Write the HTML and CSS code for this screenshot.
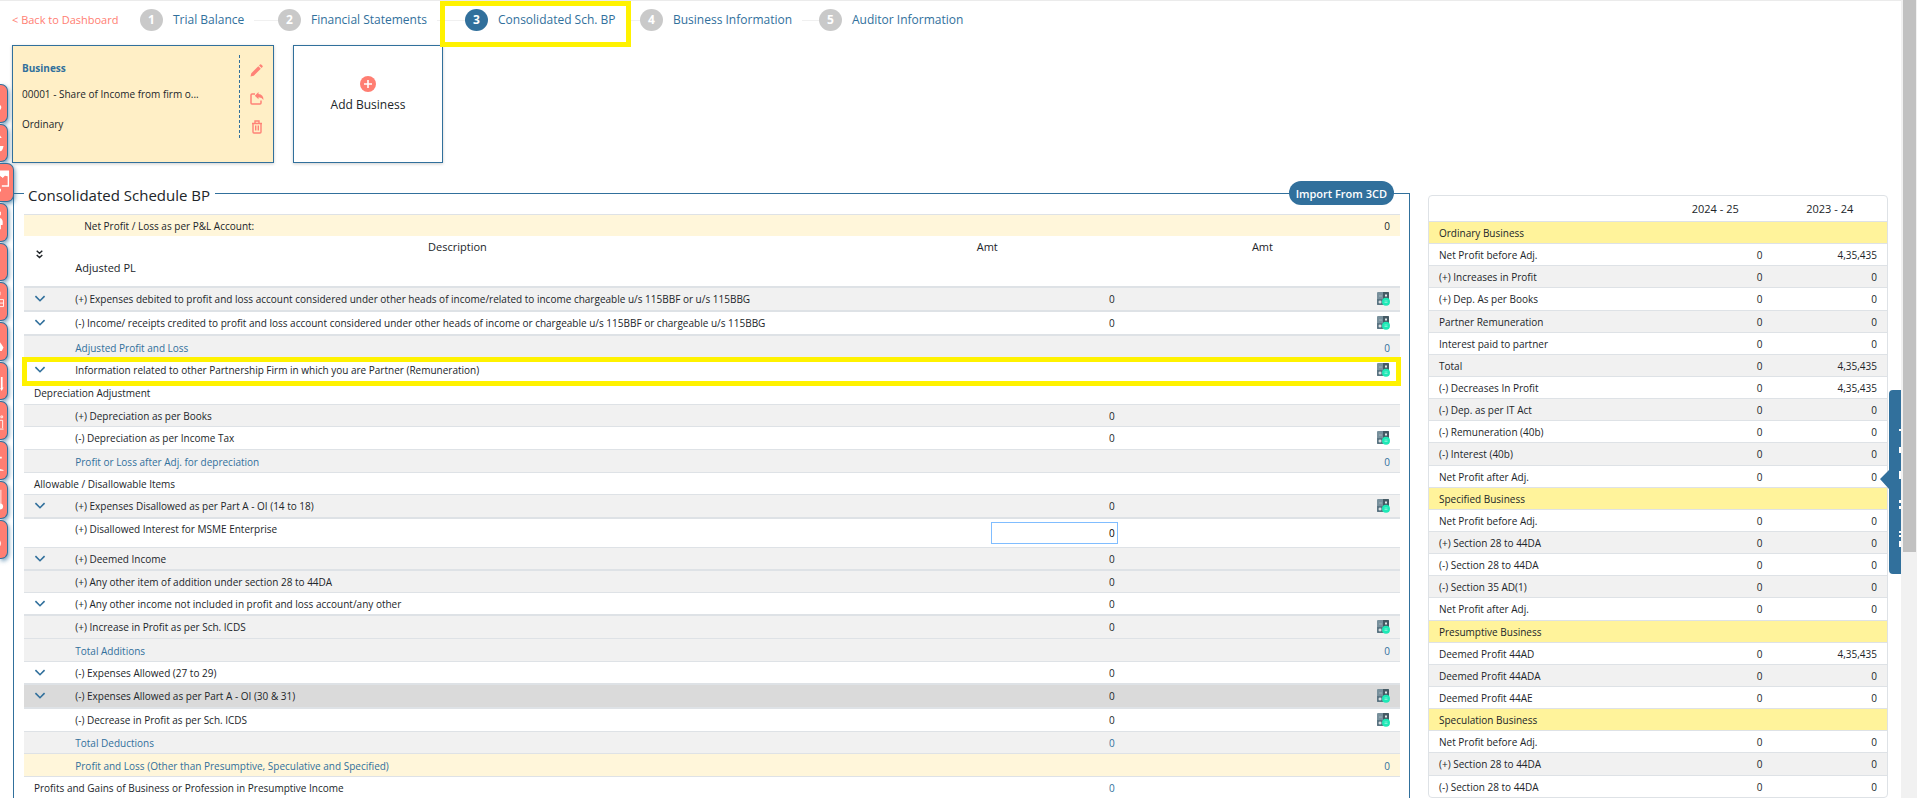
FILE: index.html
```html
<!DOCTYPE html>
<html lang="en">
<head>
    <meta charset="UTF-8">
    <meta name="viewport" content="width=device-width, initial-scale=1.0">
    <title>Consolidated Schedule BP</title>
    <link rel="stylesheet" href="styles.css">
</head>
<body>
    <svg class="sprite" aria-hidden="true">
        <symbol id="chevron" viewBox="0 0 10 7">
            <path d="M1 1l4 4 4-4" fill="none" stroke="#31709c" stroke-width="1.4"/>
        </symbol>
        <symbol id="calc" viewBox="0 0 13 14">
            <rect width="12" height="13" rx="1" fill="#78909c"/>
            <path d="M6 0h5q1 0 1 1v6H6z" fill="#455a64"/>
            <path d="M0 7h6v6H1q-1 0-1-1z" fill="#5a7482"/>
            <path d="M2 4h3" stroke="#9fb2bb" stroke-width="1"/>
            <path d="M3 8.500v3M1.500 10h3" stroke="#fff" stroke-width="1"/>
            <rect x="8" y="2.500" width="2" height="2" fill="#dfe6e9"/>
            <circle cx="9" cy="9.700" r="4" fill="#1de9b6"/>
            <path d="M7.500 9h3M7.500 10.500h3" stroke="#a5f7e2" stroke-width=".7"/>
        </symbol>
    </svg>

    <div class="app">
        <nav class="topbar">
            <a href="#" class="back-link">&lt; Back to Dashboard</a>
            <ol class="steps">
                <li class="step"><span class="num">1</span><a href="#">Trial Balance</a></li>
                <li class="step"><span class="num">2</span><a href="#">Financial Statements</a></li>
                <li class="step active"><span class="num">3</span><a href="#">Consolidated Sch. BP</a></li>
                <li class="step"><span class="num">4</span><a href="#">Business Information</a></li>
                <li class="step"><span class="num">5</span><a href="#">Auditor Information</a></li>
            </ol>
        </nav>

        <div class="cards">
            <div class="card business-card">
                <div class="business-info">
                    <h2>Business</h2>
                    <p>00001 - Share of Income from firm o...</p>
                    <p>Ordinary</p>
                </div>
                <div class="business-actions">
                    <button type="button" aria-label="Edit">
                        <svg width="13" height="13" viewBox="0 0 13 13"><path d="M0.500 12.500l.8-3.300L8.300 2.200l2.500 2.500-7 7zM9 1.500l1-1q.6-.5 1.200 0l1.300 1.300q.5.600 0 1.200l-1 1z" fill="#ff8277"/></svg>
                    </button>
                    <button type="button" aria-label="Share">
                        <svg width="14" height="13" viewBox="0 0 14 13"><path d="M5 2H2Q1 2 1 3v8q0 1 1 1h8q1 0 1-1V8.500" fill="none" stroke="#ff8277" stroke-width="1.500"/><path d="M8.500 0v2Q13.500 2.500 13.500 8 12 5.300 8.500 5.300v2L4.800 3.700z" fill="#ff8277"/></svg>
                    </button>
                    <button type="button" aria-label="Delete">
                        <svg width="12" height="14" viewBox="0 0 12 14"><path d="M1 3.500h10M4 3V1h4v2M2 3.500v8.500q0 1 1 1h6q1 0 1-1V3.500M4.700 5.500v5M7.300 5.500v5" fill="none" stroke="#ff8277" stroke-width="1.400"/></svg>
                    </button>
                </div>
            </div>
            <button type="button" class="card add-card">
                <svg width="16" height="16" viewBox="0 0 16 16"><circle cx="8" cy="8" r="8" fill="#ff7e72"/><path d="M8 4v8M4 8h8" stroke="#fff" stroke-width="1.600"/></svg>
                <span>Add Business</span>
            </button>
        </div>

        <div class="content">
            <fieldset class="schedule">
                <legend>Consolidated Schedule BP</legend>
                <button type="button" class="import-btn">Import From 3CD</button>
                <table class="bp-table">
                    <colgroup>
                        <col class="col-toggle">
                        <col>
                        <col class="col-amt">
                        <col class="col-amt">
                    </colgroup>
                    <tbody>
                        <tr class="cream net"><td></td><td>Net Profit / Loss as per P&amp;L Account:</td><td></td><td>0</td></tr>
                        <tr class="head">
                            <th rowspan="2" class="expand-all">
                                <button type="button" aria-label="Expand all"><svg width="7" height="9" viewBox="0 0 7 9"><path d="M.7.700l2.800 2.600L6.300.700M.7 4.900l2.800 2.600 2.800-2.600" fill="none" stroke="#212529" stroke-width="1.400"/></svg></button>
                            </th>
                            <th>Description</th><th>Amt</th><th>Amt</th>
                        </tr>
                        <tr class="subhead"><td>Adjusted PL</td><td></td><td></td></tr>
                        <tr class="gray split icon"><td><button type="button" aria-label="Expand"><svg><use href="#chevron"/></svg></button></td><td>(+) Expenses debited to profit and loss account considered under other heads of income/related to income chargeable u/s 115BBF or u/s 115BBG</td><td>0</td><td><button type="button" aria-label="Calculate"><svg class="calc"><use href="#calc"/></svg></button></td></tr>
                        <tr class="split icon"><td><button type="button" aria-label="Expand"><svg><use href="#chevron"/></svg></button></td><td>(-) Income/ receipts credited to profit and loss account considered under other heads of income or chargeable u/s 115BBF or chargeable u/s 115BBG</td><td>0</td><td><button type="button" aria-label="Calculate"><svg class="calc"><use href="#calc"/></svg></button></td></tr>
                        <tr class="gray split total"><td></td><td>Adjusted Profit and Loss</td><td></td><td>0</td></tr>
                        <tr class="icon marked"><td><button type="button" aria-label="Expand"><svg><use href="#chevron"/></svg></button></td><td>Information related to other Partnership Firm in which you are Partner (Remuneration)</td><td></td><td><button type="button" aria-label="Calculate"><svg class="calc"><use href="#calc"/></svg></button></td></tr>
                        <tr class="section after"><td colspan="2">Depreciation Adjustment</td><td></td><td></td></tr>
                        <tr class="gray"><td></td><td>(+) Depreciation as per Books</td><td>0</td><td></td></tr>
                        <tr class="icon"><td></td><td>(-) Depreciation as per Income Tax</td><td>0</td><td><button type="button" aria-label="Calculate"><svg class="calc"><use href="#calc"/></svg></button></td></tr>
                        <tr class="gray total"><td></td><td>Profit or Loss after Adj. for depreciation</td><td></td><td>0</td></tr>
                        <tr class="section"><td colspan="2">Allowable / Disallowable Items</td><td></td><td></td></tr>
                        <tr class="gray icon"><td><button type="button" aria-label="Expand"><svg><use href="#chevron"/></svg></button></td><td>(+) Expenses Disallowed as per Part A - OI (14 to 18)</td><td>0</td><td><button type="button" aria-label="Calculate"><svg class="calc"><use href="#calc"/></svg></button></td></tr>
                        <tr class="split entry"><td></td><td><label for="msme">(+) Disallowed Interest for MSME Enterprise</label></td><td><input type="text" id="msme" value="0"></td><td></td></tr>
                        <tr class="gray"><td><button type="button" aria-label="Expand"><svg><use href="#chevron"/></svg></button></td><td>(+) Deemed Income</td><td>0</td><td></td></tr>
                        <tr class="gray split"><td></td><td>(+) Any other item of addition under section 28 to 44DA</td><td>0</td><td></td></tr>
                        <tr><td><button type="button" aria-label="Expand"><svg><use href="#chevron"/></svg></button></td><td>(+) Any other income not included in profit and loss account/any other</td><td>0</td><td></td></tr>
                        <tr class="gray split icon"><td></td><td>(+) Increase in Profit as per Sch. ICDS</td><td>0</td><td><button type="button" aria-label="Calculate"><svg class="calc"><use href="#calc"/></svg></button></td></tr>
                        <tr class="gray total"><td></td><td>Total Additions</td><td></td><td>0</td></tr>
                        <tr><td><button type="button" aria-label="Expand"><svg><use href="#chevron"/></svg></button></td><td>(-) Expenses Allowed (27 to 29)</td><td>0</td><td></td></tr>
                        <tr class="hovered split icon"><td><button type="button" aria-label="Expand"><svg><use href="#chevron"/></svg></button></td><td>(-) Expenses Allowed as per Part A - OI (30 &amp; 31)</td><td>0</td><td><button type="button" aria-label="Calculate"><svg class="calc"><use href="#calc"/></svg></button></td></tr>
                        <tr class="split icon"><td></td><td>(-) Decrease in Profit as per Sch. ICDS</td><td>0</td><td><button type="button" aria-label="Calculate"><svg class="calc"><use href="#calc"/></svg></button></td></tr>
                        <tr class="gray blue"><td></td><td>Total Deductions</td><td>0</td><td></td></tr>
                        <tr class="cream total"><td></td><td>Profit and Loss (Other than Presumptive, Speculative and Specified)</td><td></td><td>0</td></tr>
                        <tr class="section"><td colspan="2">Profits and Gains of Business or Profession in Presumptive Income</td><td class="muted">0</td><td></td></tr>
                    </tbody>
                </table>
            </fieldset>

            <aside class="summary">
                <table class="summary-table">
                    <thead>
                        <tr><th></th><th>2024 - 25</th><th>2023 - 24</th></tr>
                    </thead>
                    <tbody>
                        <tr class="group"><td colspan="3">Ordinary Business</td></tr>
                        <tr><td>Net Profit before Adj.</td><td>0</td><td>4,35,435</td></tr>
                        <tr><td>(+) Increases in Profit</td><td>0</td><td>0</td></tr>
                        <tr><td>(+) Dep. As per Books</td><td>0</td><td>0</td></tr>
                        <tr><td>Partner Remuneration</td><td>0</td><td>0</td></tr>
                        <tr><td>Interest paid to partner</td><td>0</td><td>0</td></tr>
                        <tr><td>Total</td><td>0</td><td>4,35,435</td></tr>
                        <tr><td>(-) Decreases In Profit</td><td>0</td><td>4,35,435</td></tr>
                        <tr><td>(-) Dep. as per IT Act</td><td>0</td><td>0</td></tr>
                        <tr><td>(-) Remuneration (40b)</td><td>0</td><td>0</td></tr>
                        <tr><td>(-) Interest (40b)</td><td>0</td><td>0</td></tr>
                        <tr><td>Net Profit after Adj.</td><td>0</td><td>0</td></tr>
                        <tr class="group"><td colspan="3">Specified Business</td></tr>
                        <tr><td>Net Profit before Adj.</td><td>0</td><td>0</td></tr>
                        <tr><td>(+) Section 28 to 44DA</td><td>0</td><td>0</td></tr>
                        <tr><td>(-) Section 28 to 44DA</td><td>0</td><td>0</td></tr>
                        <tr><td>(-) Section 35 AD(1)</td><td>0</td><td>0</td></tr>
                        <tr><td>Net Profit after Adj.</td><td>0</td><td>0</td></tr>
                        <tr class="group"><td colspan="3">Presumptive Business</td></tr>
                        <tr><td>Deemed Profit 44AD</td><td>0</td><td>4,35,435</td></tr>
                        <tr><td>Deemed Profit 44ADA</td><td>0</td><td>0</td></tr>
                        <tr><td>Deemed Profit 44AE</td><td>0</td><td>0</td></tr>
                        <tr class="group"><td colspan="3">Speculation Business</td></tr>
                        <tr><td>Net Profit before Adj.</td><td>0</td><td>0</td></tr>
                        <tr><td>(+) Section 28 to 44DA</td><td>0</td><td>0</td></tr>
                        <tr><td>(-) Section 28 to 44DA</td><td>0</td><td>0</td></tr>
                    </tbody>
                </table>
            </aside>
        </div>
    </div>

    <div class="rail">
        <button type="button" aria-label="Link 1"><svg viewBox="0 0 8 38"><path d="M0 21q3 2 0 6z"/></svg></button>
        <button type="button" aria-label="Link 2"><svg viewBox="0 0 8 38"><path d="M0 10l2 3H0zM0 22h4q-1 6-4 6z"/></svg></button>
        <button type="button" class="open" aria-label="Link 3"><svg viewBox="0 0 14 38"><path d="M0 7h9v16H2M0 7v4l3 2 2-2 4 1" fill="none" stroke="#fff" stroke-width="1.500"/><path d="M0 7h9v5L5 11l-2 3-3-2zM0 26h1v3H0z"/></svg></button>
        <button type="button" aria-label="Link 4"><svg viewBox="0 0 8 38"><path d="M0 7h1v4H0zM0 14q4 1 3 8H1v5H0z"/></svg></button>
        <button type="button" aria-label="Link 5"></button>
        <button type="button" aria-label="Link 6"><svg viewBox="0 0 8 38"><path d="M0 17h4v8H0M0 21h4M0 12v-4" fill="none" stroke="#fff" stroke-width="1"/></svg></button>
        <button type="button" aria-label="Link 7"><svg viewBox="0 0 8 38"><path d="M0 20l2 3 2 3-2 4H0z"/></svg></button>
        <button type="button" aria-label="Link 8"><svg viewBox="0 0 8 38"><path d="M1 14h2v12h1l-2 4-2-3h1z"/></svg></button>
        <button type="button" aria-label="Link 9"><svg viewBox="0 0 8 38"><path d="M1 14h2v2H1zM0 19h3v9M0 29h4" fill="none" stroke="#fff" stroke-width="1"/></svg></button>
        <button type="button" aria-label="Link 10"><svg viewBox="0 0 8 38"><path d="M0 15h2v2H0zM0 29l4 1v1H0z"/></svg></button>
        <button type="button" aria-label="Link 11"><svg viewBox="0 0 8 38"><path d="M1 7v17" stroke="#fff" stroke-width="1"/><circle cx="0" cy="26" r="3.500"/></svg></button>
        <button type="button" aria-label="Link 12"><svg viewBox="0 0 8 38"><path d="M0 20q2 4 0 7z"/></svg></button>
    </div>

    <button type="button" class="side-tab" aria-label="Open panel">
        <svg width="21" height="184" viewBox="0 0 21 184">
            <path d="M21 0h-8q-4 0-4 4v76l-9 9 9 10v81q0 4 4 4h8z" fill="#31709c"/>
            <path d="M19 39h2v2h-2zM19 57h2v6h-2zM19 81h2v8h-2zM19 110h2v3h-2zM19 116h2v3h-2zM19 141h2v2h-2zM19 145h2v2h-2zM19 151h2v6h-2z" fill="#fff"/>
        </svg>
    </button>

    <div class="scrollbar"><div class="thumb"></div></div>
</body>
</html>
```
FILE: styles.css
```css
*,
*::before,
*::after {
    box-sizing: border-box;
}

body {
    margin: 0;
    font-family: "Segoe UI", "Open Sans", sans-serif;
    font-size: 10px;
    line-height: 14px;
    color: #212529;
    background: #fff;
    overflow: hidden;
}

button {
    font-family: inherit;
    color: inherit;
    padding: 0;
    border: 0;
    background: none;
    cursor: pointer;
}

a {
    color: #31709c;
    text-decoration: none;
}

svg {
    display: block;
}

.sprite {
    position: absolute;
    width: 0;
    height: 0;
}

.app {
    height: 100vh;
    padding: 0 29px 0 12px;
    border-top: 1px solid #ebebeb;
    overflow: hidden;
}

/* steps */
.topbar {
    display: flex;
    align-items: center;
    height: 38px;
    margin-bottom: 6px;
}

.back-link {
    width: 128px;
    color: #ff7e72;
    font-size: 11px;
}

.steps {
    display: grid;
    grid-template-columns: 138px 187px 175px 179px 160px;
    margin: 0;
    padding: 0;
    list-style: none;
    font-size: 12px;
}

.step {
    position: relative;
    display: flex;
    align-items: center;
    gap: 10px;
    white-space: nowrap;
}

.step::after {
    content: "";
    flex: 1;
    height: 1px;
    background: #f0f0f0;
}

.step:last-child::after {
    display: none;
}

.num {
    width: 23px;
    height: 22px;
    border-radius: 50%;
    background: #c9c9c9;
    color: #fff;
    font-weight: bold;
    line-height: 22px;
    text-align: center;
}

.active .num {
    background: #31709c;
}

.active::before {
    content: "";
    position: absolute;
    top: -8px;
    left: -25px;
    width: 191px;
    height: 46px;
    border: 5px solid #fff200;
    z-index: 2;
}

/* cards */
.cards {
    display: flex;
    gap: 19px;
    margin-bottom: 18px;
}

.card {
    height: 118px;
    border: 1px solid #31709c;
    background: #fff;
    box-shadow: 0 1px 3px rgba(0, 0, 0, 0.2);
}

.business-card {
    display: flex;
    width: 262px;
    padding: 9px 0 9px 9px;
    background: #ffefc6;
}

.business-info {
    flex: 1;
    height: 83px;
    padding-top: 6px;
    border-right: 1px dashed #31709c;
    white-space: nowrap;
}

.business-info h2 {
    margin: 0 0 12px;
    font-size: 10px;
    font-weight: bold;
    line-height: 14px;
    color: #31709c;
}

.business-info p {
    margin: 0 0 16px;
}

.business-actions {
    display: flex;
    flex-direction: column;
    align-items: center;
    gap: 15px;
    width: 33px;
    padding-top: 9px;
}

.add-card {
    display: flex;
    flex-direction: column;
    align-items: center;
    gap: 4px;
    width: 150px;
    padding-top: 30px;
    font-size: 12px;
    line-height: 18px;
}

/* schedule */
.content {
    display: flex;
    align-items: flex-start;
    gap: 18px;
    padding-left: 1px;
}

.schedule {
    position: relative;
    flex: 1;
    min-width: 0;
    margin: 0;
    padding: 9px 9px 30px 10px;
    border: 1px solid #31709c;
}

.schedule legend {
    padding: 4px 5px 0 4px;
    font-size: 15px;
    line-height: 20px;
}

.import-btn {
    position: absolute;
    top: -24px;
    right: 15px;
    height: 24px;
    padding: 0 7px;
    border-radius: 12px;
    background: #31709c;
    color: #fff;
    font-size: 11px;
    font-weight: 600;
}

table {
    width: 100%;
    table-layout: fixed;
    border-collapse: separate;
    border-spacing: 0;
}

td,
th {
    padding: 0 10px;
    font-weight: normal;
}

.col-toggle {
    width: 3%;
}

.col-amt {
    width: 20%;
}

.bp-table td {
    height: 22px;
    border-top: 1px solid #dee2e6;
    white-space: nowrap;
}

.bp-table td:nth-last-child(-n+2) {
    text-align: right;
}

.bp-table button {
    display: block;
}

.bp-table td:first-child svg {
    width: 12px;
    height: 8px;
}

.bp-table .calc {
    width: 13px;
    height: 14px;
}

.bp-table td:last-child button {
    margin-left: auto;
}

.bp-table .icon td,
.bp-table .total td {
    height: 23px;
}

.bp-table .split td {
    height: 23px;
    border-top-width: 2px;
}

.bp-table .split.icon td,
.bp-table .split.total td {
    height: 24px;
}

.bp-table .total td {
    padding-top: 1px;
}

.total,
.blue,
.muted {
    color: #31709c;
}

.gray {
    background: #f1f1f1;
}

.cream {
    background: #fff6da;
}

.hovered {
    background: #dadada;
}

.bp-table .net td:nth-child(2) {
    padding-left: 19px;
}

.bp-table .head th {
    height: 22px;
    font-size: 11px;
}

.bp-table .head .expand-all {
    padding-top: 14px;
    vertical-align: top;
}

.expand-all button {
    margin-left: 2px;
}

.bp-table .subhead td {
    height: 28px;
    padding-bottom: 8px;
    border-top: 0;
    font-size: 11px;
}

.bp-table .subhead td:first-child {
    text-align: left;
}

.bp-table .after td {
    height: 23px;
    border-top: 0;
}

.bp-table .entry td {
    height: 30px;
    padding-top: 3px;
    vertical-align: top;
}

.bp-table .entry td:nth-child(3) {
    padding-right: 7px;
}

.entry input {
    display: block;
    width: 127px;
    height: 22px;
    margin-left: auto;
    padding: 0 2px;
    border: 1px solid #80bdff;
    font-family: inherit;
    font-size: 10px;
    text-align: right;
}

.marked {
    position: relative;
}

.marked td:last-child::after {
    content: "";
    position: absolute;
    top: -1px;
    right: -1px;
    bottom: -5px;
    left: -2px;
    border: 5px solid #fff200;
    pointer-events: none;
}

/* yearly summary */
.summary {
    width: 460px;
    margin-top: 14px;
    border: 1px solid #dee2e6;
    border-radius: 4px;
}

.summary-table th {
    width: 25%;
    height: 25px;
    font-size: 11px;
}

.summary-table th:first-child {
    width: 50%;
}

.summary-table td {
    height: 22px;
    border-top: 1px solid #dee2e6;
    text-align: right;
}

.summary-table td:first-child {
    text-align: left;
}

.summary-table tbody tr:nth-child(odd) {
    background: #f1f1f1;
}

.summary-table tbody tr:nth-child(7n+4) td {
    height: 23px;
}

.summary-table tbody tr.group:nth-child(odd) {
    background: #fff39b;
}

/* left rail */
.rail {
    position: fixed;
    top: 84px;
    left: 0;
    display: flex;
    flex-direction: column;
    gap: 1px;
    height: 475px;
}

.rail button {
    flex: 1;
    width: 8px;
    border: 1px solid #31709c;
    border-left: 0;
    border-radius: 0 7px 7px 0;
    background: #ff7e72;
    box-shadow: 1px 2px 4px rgba(49, 112, 156, 0.7);
    overflow: hidden;
}

.rail .open {
    width: 14px;
}

.rail svg {
    width: 100%;
    height: 100%;
    fill: #fff;
}

/* right edge */
.side-tab {
    position: fixed;
    top: 390px;
    right: 16px;
}

.scrollbar {
    position: fixed;
    top: 0;
    right: 0;
    bottom: 0;
    width: 16px;
    padding: 0 1px 0 2px;
    background: #f1f1f1;
}

.thumb {
    height: 552px;
    background: #c1c1c1;
}
```
